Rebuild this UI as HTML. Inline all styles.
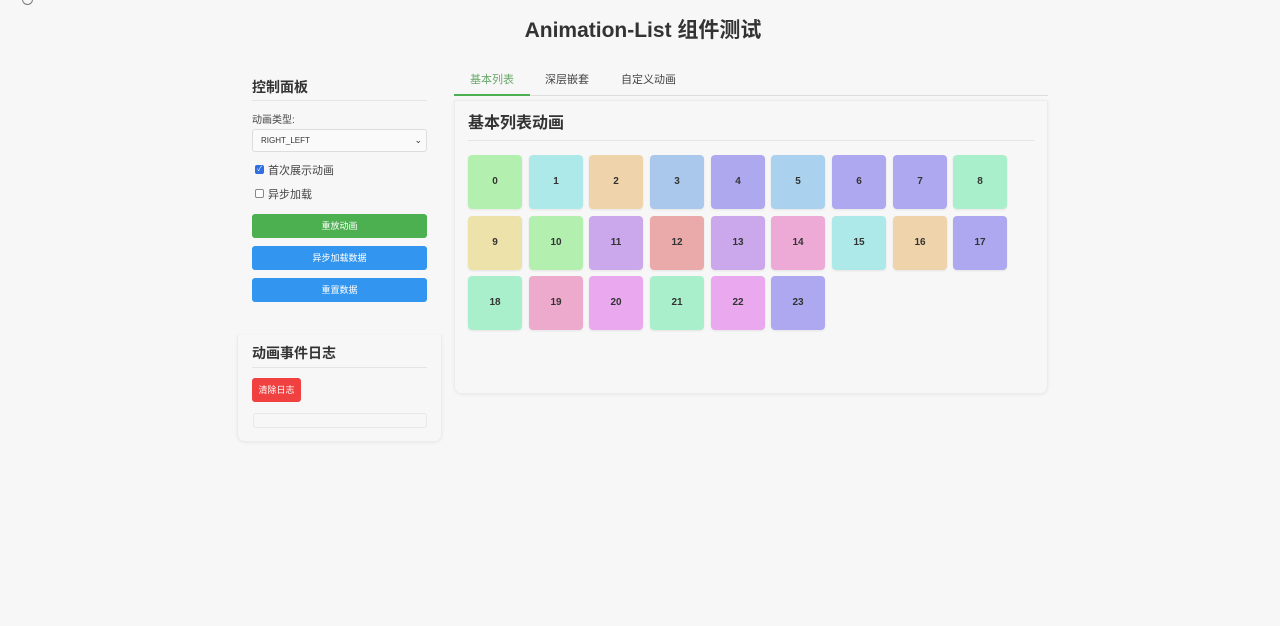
<!DOCTYPE html>
<html><head><meta charset="utf-8"><style>
*{box-sizing:border-box;margin:0;padding:0}
body{width:1280px;height:626px;background:#f7f7f7;font-family:"Liberation Sans","Noto Sans CJK SC",sans-serif;color:#333;position:relative;overflow:hidden}
.a{position:absolute}
h1{position:absolute;top:14px;left:0;width:1286px;text-align:center;font-size:21px;font-weight:bold;color:#333}
.h3{font-size:14px;font-weight:bold;color:#333}
.line{height:1px;background:#e4e4e4}
.btn{position:absolute;left:252px;width:175px;height:24px;border-radius:3px;color:#fff;font-size:9px;text-align:center;line-height:24px}
.tile{position:absolute;width:54px;height:54px;border-radius:4px;font-size:10px;font-weight:bold;text-align:center;line-height:54px;color:#333;box-shadow:0 1px 2px rgba(0,0,0,.08)}
.cb{position:absolute;width:9px;height:9px;border:1px solid #888;border-radius:2px;background:#fff}
</style></head><body>
<div class="a" style="left:22px;top:-6px;width:11px;height:11px;border:1px solid #777;border-radius:50%"></div>
<h1>Animation-List 组件测试</h1>

<div class="a h3" style="left:252px;top:77px">控制面板</div>
<div class="a line" style="left:252px;top:100px;width:175px"></div>
<div class="a" style="left:252px;top:111px;font-size:10px;color:#444">动画类型:</div>
<div class="a" style="left:252px;top:129px;width:175px;height:23px;border:1px solid #ddd;border-radius:3px;background:#fafafa;font-size:8px;line-height:21px;padding-left:8px;color:#333">RIGHT_LEFT<span style="position:absolute;right:4px;font-size:9px">⌄</span></div>
<div class="cb" style="left:255px;top:165px;background:#2f6fe0;border-color:#2f6fe0;color:#fff;font-size:7px;line-height:7px;text-align:center">✓</div>
<div class="a" style="left:268px;top:162px;font-size:11px;color:#444">首次展示动画</div>
<div class="cb" style="left:255px;top:189px"></div>
<div class="a" style="left:268px;top:186px;font-size:11px;color:#444">异步加载</div>
<div class="btn" style="top:214px;background:#4caf50">重放动画</div>
<div class="btn" style="top:246px;background:#3296f0">异步加载数据</div>
<div class="btn" style="top:278px;background:#3296f0">重置数据</div>

<div class="a" style="left:237px;top:335px;width:205px;height:107px;border:1px solid #ececec;border-top:none;border-radius:0 0 8px 8px;box-shadow:0 1px 3px rgba(0,0,0,.06)"></div>
<div class="a h3" style="left:252px;top:343px">动画事件日志</div>
<div class="a line" style="left:252px;top:367px;width:175px"></div>
<div class="a" style="left:252px;top:378px;width:49px;height:24px;background:#f04040;border-radius:3px;color:#fff;font-size:9px;line-height:24px;text-align:center">清除日志</div>
<div class="a" style="left:253px;top:413px;width:174px;height:15px;border:1px solid #e8e8e8;border-radius:3px"></div>

<div class="a" style="left:470px;top:71px;font-size:11px;color:#6aa86a">基本列表</div>
<div class="a" style="left:545px;top:71px;font-size:11px;color:#444">深层嵌套</div>
<div class="a" style="left:621px;top:71px;font-size:11px;color:#444">自定义动画</div>
<div class="a" style="left:454px;top:95px;width:594px;height:1px;background:#ddd"></div>
<div class="a" style="left:454px;top:94px;width:76px;height:2px;background:#4caf50"></div>

<div class="a" style="left:454px;top:100px;width:594px;height:294px;border:1px solid #ececec;border-radius:0 0 8px 8px;box-shadow:0 1px 3px rgba(0,0,0,.06)"></div>
<div class="a" style="left:468px;top:109px;font-size:16px;font-weight:bold;color:#333">基本列表动画</div>
<div class="a line" style="left:468px;top:140px;width:566px"></div>

<div class="tile" style="left:468px;top:155px;background:#b3f0b0">0</div>
<div class="tile" style="left:529px;top:155px;background:#ade9e9">1</div>
<div class="tile" style="left:589px;top:155px;background:#efd3aa">2</div>
<div class="tile" style="left:650px;top:155px;background:#aac8ec">3</div>
<div class="tile" style="left:711px;top:155px;background:#aea8ef">4</div>
<div class="tile" style="left:771px;top:155px;background:#aad2ef">5</div>
<div class="tile" style="left:832px;top:155px;background:#ada8ef">6</div>
<div class="tile" style="left:893px;top:155px;background:#ada8ef">7</div>
<div class="tile" style="left:953px;top:155px;background:#aaefcc">8</div>
<div class="tile" style="left:468px;top:216px;background:#ede3aa">9</div>
<div class="tile" style="left:529px;top:216px;background:#b3f0b0">10</div>
<div class="tile" style="left:589px;top:216px;background:#cba8ec">11</div>
<div class="tile" style="left:650px;top:216px;background:#eaaaaa">12</div>
<div class="tile" style="left:711px;top:216px;background:#cba8ec">13</div>
<div class="tile" style="left:771px;top:216px;background:#eeaad6">14</div>
<div class="tile" style="left:832px;top:216px;background:#ade9e9">15</div>
<div class="tile" style="left:893px;top:216px;background:#efd3aa">16</div>
<div class="tile" style="left:953px;top:216px;background:#ada8ef">17</div>
<div class="tile" style="left:468px;top:276px;background:#aaefcc">18</div>
<div class="tile" style="left:529px;top:276px;background:#eeaacc">19</div>
<div class="tile" style="left:589px;top:276px;background:#eaa8ef">20</div>
<div class="tile" style="left:650px;top:276px;background:#aaefcc">21</div>
<div class="tile" style="left:711px;top:276px;background:#eaa8ef">22</div>
<div class="tile" style="left:771px;top:276px;background:#ada8ef">23</div>
</body></html>
